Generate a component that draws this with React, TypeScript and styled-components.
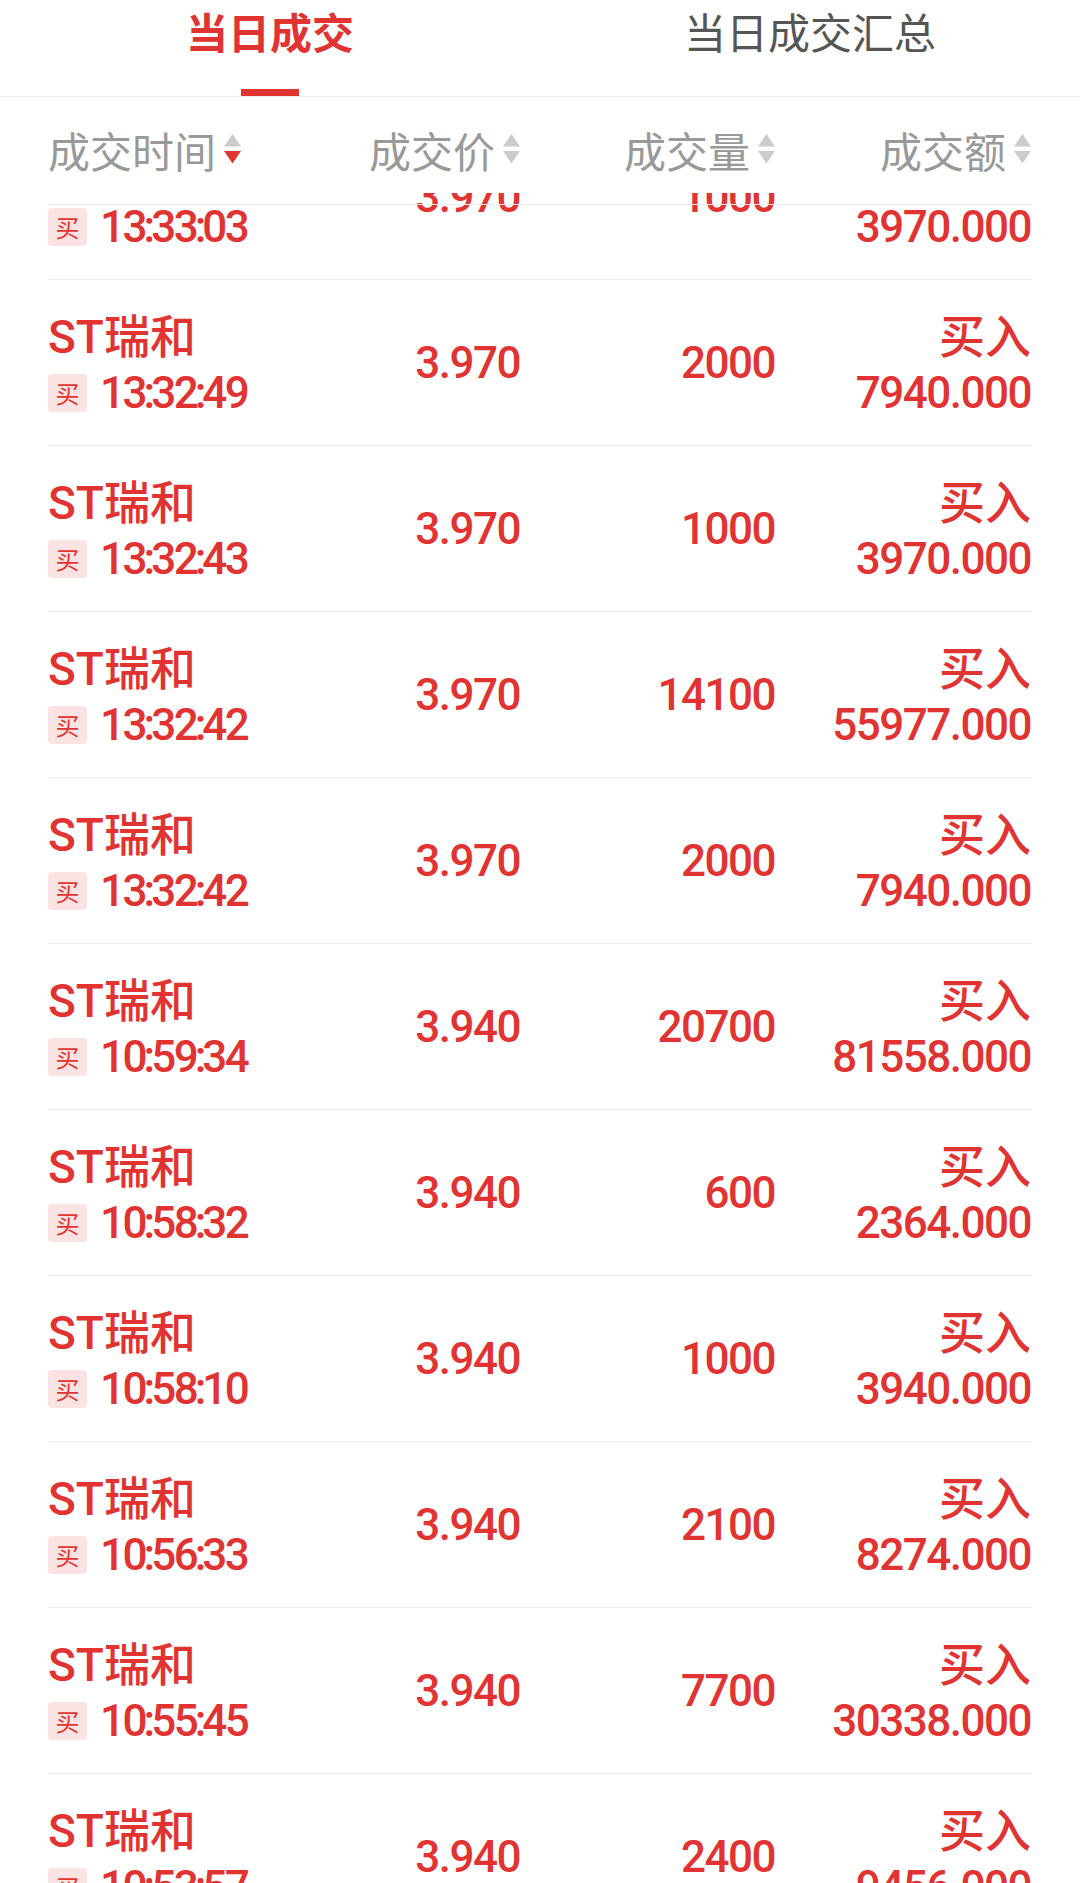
import React, { FC } from 'react';
import styled, { createGlobalStyle } from 'styled-components';

const RED = '#e23333';
const LINE = '#ececec';

const GlobalStyle = createGlobalStyle`
  html, body {
    margin: 0;
    padding: 0;
    background: #fff;
    overflow: hidden;
  }
  body {
    font-family: Roboto, "Noto Sans CJK SC", sans-serif;
  }
`;

interface ITrade {
  time: string;
  price: string;
  volume: string;
  amount: string;
}

const trades: ITrade[] = [
  { time: '13:33:03', price: '3.970', volume: '1000', amount: '3970.000' },
  { time: '13:32:49', price: '3.970', volume: '2000', amount: '7940.000' },
  { time: '13:32:43', price: '3.970', volume: '1000', amount: '3970.000' },
  { time: '13:32:42', price: '3.970', volume: '14100', amount: '55977.000' },
  { time: '13:32:42', price: '3.970', volume: '2000', amount: '7940.000' },
  { time: '10:59:34', price: '3.940', volume: '20700', amount: '81558.000' },
  { time: '10:58:32', price: '3.940', volume: '600', amount: '2364.000' },
  { time: '10:58:10', price: '3.940', volume: '1000', amount: '3940.000' },
  { time: '10:56:33', price: '3.940', volume: '2100', amount: '8274.000' },
  { time: '10:55:45', price: '3.940', volume: '7700', amount: '30338.000' },
  { time: '10:53:57', price: '3.940', volume: '2400', amount: '9456.000' },
];

const columns = [
  { label: '成交时间', sort: 'desc' as const },
  { label: '成交价' },
  { label: '成交量' },
  { label: '成交额' },
];

const GRID = '272px 200px 255px 256px';

const Page = styled.div`
  height: 100vh;
  display: flex;
  flex-direction: column;
  background: #fff;
`;

const TabBar = styled.div`
  height: 97px;
  box-sizing: border-box;
  border-bottom: 1px solid ${LINE};
  display: grid;
  grid-template-columns: 1fr 1fr;
  flex-shrink: 0;
`;

const Tab = styled.div<{ $active?: boolean }>`
  display: flex;
  flex-direction: column;
  align-items: center;
  justify-content: space-between;
  font-family: "Noto Sans CJK SC", sans-serif;
  font-size: 42px;
  line-height: 62px;
  font-weight: ${(p) => (p.$active ? 700 : 400)};
  color: ${(p) => (p.$active ? RED : '#555')};
`;

const Indicator = styled.div`
  width: 58px;
  height: 7px;
  background: ${RED};
`;

const HeadRow = styled.div`
  height: 96px;
  box-sizing: border-box;
  padding: 8px 48px 0 48px;
  display: grid;
  grid-template-columns: ${GRID};
  align-items: center;
  flex-shrink: 0;
`;

const HeadCell = styled.div<{ $first?: boolean }>`
  display: flex;
  align-items: center;
  justify-content: ${(p) => (p.$first ? 'flex-start' : 'flex-end')};
  font-family: "Noto Sans CJK SC", sans-serif;
  font-size: 42px;
  color: #999;
`;

const SortIcon = styled.svg`
  width: 17px;
  height: 30px;
  margin-left: 8px;
  flex-shrink: 0;
`;

const Viewport = styled.div`
  position: relative;
  flex: 1;
  overflow: hidden;
`;

const TopRule = styled.div`
  position: absolute;
  top: 11px;
  left: 48px;
  right: 48px;
  height: 1px;
  background: ${LINE};
`;

const List = styled.div`
  margin-top: -79px;
  padding: 0 48px;
`;

const Row = styled.div`
  height: 166px;
  box-sizing: border-box;
  border-bottom: 1px solid ${LINE};
  display: grid;
  grid-template-columns: ${GRID};
  align-items: center;
  color: ${RED};
  font-size: 44px;
  font-weight: 500;
`;

const Stack = styled.div<{ $right?: boolean }>`
  display: flex;
  flex-direction: column;
  align-items: ${(p) => (p.$right ? 'flex-end' : 'flex-start')};
  line-height: 56px;
  padding-top: 4px;
`;

const Label = styled.div`
  font-family: Roboto, "Noto Sans CJK SC", sans-serif;
  font-size: 46px;
  white-space: nowrap;
`;

const TimeLine = styled.div`
  display: flex;
  align-items: center;
  gap: 13px;
`;

const Badge = styled.span`
  width: 39px;
  height: 38px;
  border-radius: 4px;
  background: #fce3e3;
  color: ${RED};
  font-family: "Noto Sans CJK SC", sans-serif;
  font-size: 24px;
  font-weight: 400;
  line-height: 38px;
  text-align: center;
`;

const Num = styled.span<{ $right?: boolean; $tight?: boolean }>`
  font-family: Roboto, sans-serif;
  letter-spacing: ${(p) => (p.$tight ? '-2.5px' : '-1.5px')};
  white-space: nowrap;
  text-align: ${(p) => (p.$right ? 'right' : 'left')};
`;

const Colon = styled.span`
  margin: 0 -1.5px;
`;

const Sorter: FC<{ dir?: 'asc' | 'desc' }> = ({ dir }) => (
  <SortIcon viewBox="0 0 17 30">
    <path d="M8.5 0 L17 12.5 L0 12.5 Z" fill={dir === 'asc' ? RED : '#cccccc'} />
    <path d="M0 17 L17 17 L8.5 29.5 Z" fill={dir === 'desc' ? RED : '#cccccc'} />
  </SortIcon>
);

const Clock: FC<{ value: string }> = ({ value }) => {
  const parts = value.split(':');
  return (
    <Num $tight>
      {parts.map((p, i) => (
        <React.Fragment key={i}>
          {i > 0 && <Colon>:</Colon>}
          {p}
        </React.Fragment>
      ))}
    </Num>
  );
};

const TradeRow: FC<{ trade: ITrade }> = ({ trade }) => (
  <Row>
    <Stack>
      <Label>ST瑞和</Label>
      <TimeLine>
        <Badge>买</Badge>
        <Clock value={trade.time} />
      </TimeLine>
    </Stack>
    <Num $right>{trade.price}</Num>
    <Num $right>{trade.volume}</Num>
    <Stack $right>
      <Label>买入</Label>
      <Num $right>{trade.amount}</Num>
    </Stack>
  </Row>
);

const App: FC = () => {
  return (
    <Page>
      <GlobalStyle />
      <TabBar>
        <Tab $active>
          <span>当日成交</span>
          <Indicator />
        </Tab>
        <Tab>
          <span>当日成交汇总</span>
        </Tab>
      </TabBar>
      <HeadRow>
        {columns.map((c, i) => (
          <HeadCell key={c.label} $first={i === 0}>
            {c.label}
            <Sorter dir={c.sort} />
          </HeadCell>
        ))}
      </HeadRow>
      <Viewport>
        <List>
          {trades.map((t, i) => (
            <TradeRow key={i} trade={t} />
          ))}
        </List>
        <TopRule />
      </Viewport>
    </Page>
  );
};

export default App;
